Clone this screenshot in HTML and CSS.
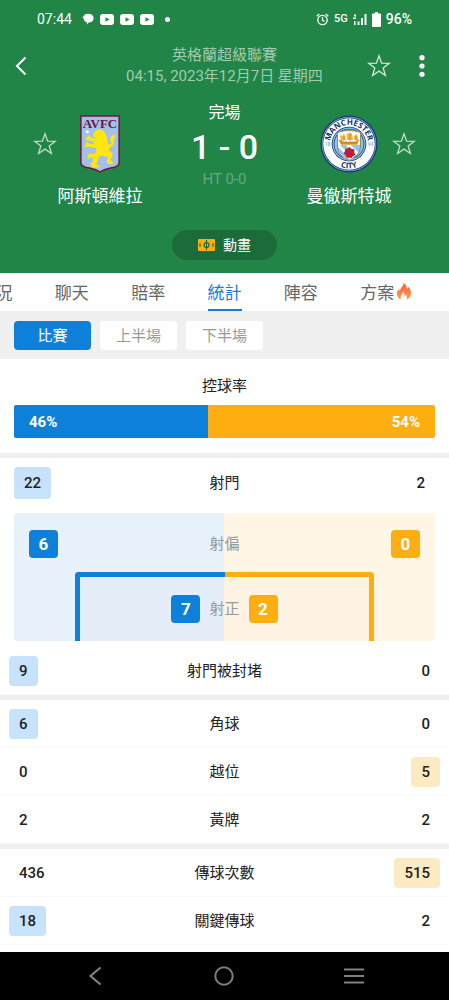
FILE: index.html
```html
<!DOCTYPE html>
<html lang="zh-Hant">
<head>
    <meta charset="utf-8" />
    <meta name="viewport" content="width=device-width, initial-scale=1" />
    <title>阿斯頓維拉 1 - 0 曼徹斯特城</title>
    <link rel="stylesheet" href="styles.css">
</head>
<body>
    <svg class="defs" width="0" height="0" aria-hidden="true">
        <symbol id="star" viewBox="0 0 24 24">
            <path d="M12 1.8l2.6 7.3 7.7.2-6.1 4.7 2.2 7.5-6.4-4.4-6.4 4.4 2.2-7.5-6.1-4.7 7.7-.2z" fill="none" stroke="currentColor" stroke-width="1.3" />
        </symbol>
        <symbol id="video" viewBox="0 0 14 11">
            <rect width="14" height="11" rx="3" fill="#fff" />
            <path d="M5.5 3.2v4.6l4-2.3z" fill="#218548" />
        </symbol>
    </svg>

    <header class="header">
        <!-- 狀態列 -->
        <div class="status">
            <div class="status_left">
                <span class="time">07:44</span>
                <svg width="12" height="12" viewBox="0 0 12 12"><path d="M2.6 1.6C5 .2 9.5.3 11 3c1.2 2.3.4 5-2 6.1-.8.4-1.6.5-2.3.5L5 11.5 4.8 9.3C2.8 8.7 1.600 7 1.5 5.2L.4 4.3z" fill="#fff" /><path d="M.6 3.6L3.3 1.2" stroke="#218548" stroke-width=".6" /></svg>
                <svg width="14" height="11"><use href="#video" /></svg>
                <svg width="14" height="11"><use href="#video" /></svg>
                <svg width="14" height="11"><use href="#video" /></svg>
                <span class="dot"></span>
            </div>
            <div class="status_right">
                <svg width="13" height="13" viewBox="0 0 13 13" fill="none" stroke="#fff" stroke-width="1.3"><circle cx="6.5" cy="7" r="4.7" /><path d="M6.5 4.3v2.900l1.900 1.200M.7 3.200L3.300 1M12.300 3.200L9.700 1" /></svg>
                <span class="net">5G</span>
                <svg width="14" height="13" viewBox="0 0 14 13" fill="#fff"><path d="M1 1.5h2v2H1zM0 4.5h3V6H0zM1 8h1.500v4H1zM4.500 8.500h2V12h-2zM8 5h2v7H8zM11.500 1h2v11h-2z" /></svg>
                <svg width="9" height="15" viewBox="0 0 9 15" fill="#fff"><path d="M3 0h3v1.500h2a1 1 0 0 1 1 1V14a1 1 0 0 1-1 1H1a1 1 0 0 1-1-1V2.500a1 1 0 0 1 1-1h2z" /></svg>
                <span class="power">96%</span>
            </div>
        </div>

        <div class="appbar">
            <div class="appbar_side">
                <a href="#" aria-label="返回"><svg width="12" height="20" viewBox="0 0 12 20"><path d="M10.5 1.5L2 10l8.5 8.5" fill="none" stroke="#fff" stroke-width="2" /></svg></a>
            </div>
            <div class="league">
                <p>英格蘭超級聯賽</p>
                <p>04:15, 2023年12月7日 星期四</p>
            </div>
            <div class="appbar_side appbar_end">
                <button type="button" class="icon_btn" aria-label="收藏"><svg width="24" height="24"><use href="#star" /></svg></button>
                <button type="button" class="icon_btn" aria-label="更多"><svg width="6" height="22" viewBox="0 0 6 22" fill="#fff"><circle cx="3" cy="2.7" r="2.6" /><circle cx="3" cy="11" r="2.6" /><circle cx="3" cy="19.3" r="2.6" /></svg></button>
            </div>
        </div>

        <!-- 比分 -->
        <div class="match">
            <button type="button" class="icon_btn fav" aria-label="收藏阿斯頓維拉"><svg width="24" height="24"><use href="#star" /></svg></button>
            <div class="team">
                <svg width="40" height="58" viewBox="0 0 40 58">
                    <path d="M.9.9h38.2v46.6c0 2.5-1.5 3.6-4 4.4C28.5 53.6 24 54.3 20 57 16 54.3 11.5 53.6 4.9 51.900c-2.5-.8-4-1.9-4-4.4z" fill="#a3c1e6" stroke="#6d1740" stroke-width="1.5" />
                    <text x="20" y="12.5" text-anchor="middle" class="avfc">AVFC</text>
                    <circle cx="7.3" cy="16.8" r="1.5" fill="#fff" />
                    <path d="M14 17.5l2.5-2.3 3-.9 2.5.6 2.4 2 1.8 3.6 1.2 4.2.4 4.2 2.6.7 1.200-1.600-1.500-2.500.2-3 2-2.200 3.500-1.200-1.300 2.800 1 1.500-2.200 1.300.9 2.400-1 3-2.300 1.600-1.500 1-.6 2.200 2 2 2 2.200-1.200 3.600-1.600 2 2.500 2 1 2.400h-5.500l-1.600-2.500 1.500-3.300-.8-1.700-4-.8-3.400.2-1.800 3.500-1.800 4.500 2.600 1.800 1 1.800-6.500.2-2.600-1.200.8-1.500-1.800-1.100 2.400-1.400 1.600-4.800-2.500-.4-3 1.700-1.400-1.400 1.600-1.600-.8-1.800 4.400-.4 3.200.2 1.200-3.300-.2-3.400-3.800.2-3.800-1.200-3.400.8-.5-1.800 1.800-1.400-1.300-1.600 2.600-.2 1.600 1.700 3.400.1 2.200-1-1.500-1.300-4.200-1.400-3.300.3.500-2.200-1-1.400 2.600-.3.800-1.600 1.800 2.200 3.800 1.200 2 .1-.9-1.400-2.400.1z" fill="#ffe60c" />
                </svg>
                <p class="name">阿斯頓維拉</p>
            </div>
            <div class="score">
                <p class="state">完場</p>
                <p class="result">1 - 0</p>
                <p class="half">HT 0-0</p>
            </div>
            <div class="team">
                <svg width="58" height="58" viewBox="0 0 58 58">
                    <defs>
                        <path id="arcTop" d="M12.500 39a19.200 19.200 0 1 1 33 0" />
                        <path id="arcBottom" d="M4.500 29a24.500 24.500 0 0 0 49 0" />
                        <clipPath id="shield"><path d="M17.500 17.500q11.500-4 23 0V32q-1 9-11.500 14Q18.500 41 17.500 32z" /></clipPath>
                    </defs>
                    <circle cx="29" cy="29" r="28.500" fill="#17386e" />
                    <circle cx="29" cy="29" r="27.200" fill="#87b7df" />
                    <circle cx="29" cy="29" r="26.500" fill="#17386e" />
                    <circle cx="29" cy="29" r="25.800" fill="#fff" />
                    <circle cx="29" cy="29" r="17.300" fill="#17386e" />
                    <circle cx="29" cy="29" r="16.500" fill="#90c2e8" />
                    <circle cx="29" cy="29" r="15.300" fill="#234c84" />
                    <circle cx="29" cy="29" r="14.500" fill="#90c2e8" />
                    <g clip-path="url(#shield)">
                        <path d="M16 14h26v34H16z" fill="#fff" />
                        <path d="M16 30h26v18H16z" fill="#91c7ec" />
                        <path d="M16 34L31 49h-6L16 40zM16 30h4l18 18h-4zM26 30h5l12 12v5z" fill="#fff" />
                    </g>
                    <path d="M17.500 17.500q11.500-4 23 0V32q-1 9-11.500 14Q18.500 41 17.500 32z" fill="none" stroke="#8c733c" stroke-width=".8" />
                    <path d="M18.500 25h3l2 1.400h12l2-1.900 2 .1-2.700 5.200H21z" fill="#d99a23" />
                    <path d="M20 20.500h5l1 4.500h-5.500zM26.500 18.500h5.500l1 6.500h-6zM33.500 20.500h4l.7 4.200-4 .6z" fill="#efb735" />
                    <path d="M24 19v7M30 17v9M36 19v6M21 28h16" stroke="#a87720" stroke-width=".6" />
                    <path d="M29.500 32l2 2 2.900.3-.2 2.900 1.200 2.600-2.700 1.200-1.200 2.200-2.400-.8-2.600.4-.9-2.500-2-1.900 1.400-2.300.2-2.400 2.500-.1z" fill="#c51c34" />
                    <g class="city">
                        <text><textPath href="#arcTop" startOffset="50%" text-anchor="middle">MANCHESTER</textPath></text>
                        <text><textPath href="#arcBottom" startOffset="50%" text-anchor="middle">CITY</textPath></text>
                    </g>
                    <g class="year">
                        <text x="7.500" y="31" text-anchor="middle">18</text>
                        <text x="50.500" y="31" text-anchor="middle">94</text>
                    </g>
                </svg>
                <p class="name">曼徹斯特城</p>
            </div>
            <button type="button" class="icon_btn fav" aria-label="收藏曼徹斯特城"><svg width="24" height="24"><use href="#star" /></svg></button>
        </div>

        <button type="button" class="live">
            <svg width="17" height="12" viewBox="0 0 17 12"><rect width="17" height="12" rx="1" fill="#ffae12" /><path d="M8.5 1v10M2 4.300v3.400M15 4.300v3.400" stroke="#1c6b3b" stroke-width="1.2" /><circle cx="8.5" cy="6" r="2.5" fill="none" stroke="#1c6b3b" stroke-width="1.2" /></svg>
            動畫
        </button>
    </header>

    <nav class="tabs">
        <a href="#">概況</a>
        <a href="#">聊天</a>
        <a href="#">賠率</a>
        <a href="#" class="tab_active">統計</a>
        <a href="#">陣容</a>
        <a href="#">方案<svg class="hot" width="16" height="17" viewBox="0 0 16 17">
            <defs><linearGradient id="fire" x1="0" y1="0" x2="0" y2="1"><stop offset="0" stop-color="#ff5a3c" /><stop offset="1" stop-color="#ffa04a" /></linearGradient></defs>
            <path d="M7.500 0C10 1.700 10.800 3.700 10.800 6c.8-.4 1.300-1 1.500-2.200C14 5.500 15 7.600 15 10c0 3.600-2 6-4.500 6.700.8-1.700.5-3.700-.8-5-.2 1-.6 1.400-1.200 1.700.2-1.900-.4-3.400-1.500-4.600-.2 2.300-2.400 3.400-2.400 5.800 0 .8.200 1.500.6 2.100C2.600 15.800 1 13.600 1 10.700c0-2 .7-3.600 1.500-4.800.3 1 .7 1.600 1.300 2C4.500 4.500 7.500 3.300 7.500 0z" fill="url(#fire)" /></svg></a>
    </nav>

    <div class="periods">
        <button type="button" class="period_active">比賽</button>
        <button type="button">上半場</button>
        <button type="button">下半場</button>
    </div>

    <main>
        <section class="possession">
            <h2>控球率</h2>
            <div class="bar">
                <span class="bar_home" style="width:46%">46%</span>
                <span class="bar_away">54%</span>
            </div>
        </section>

        <section class="group">
            <div class="shots">
                <span class="num more_home">22</span>
                <span>射門</span>
                <span class="num">2</span>
            </div>
            <!-- 射門示意圖 -->
            <div class="field">
                <div class="off_target">
                    <b class="box box_home">6</b>
                    <span>射偏</span>
                    <b class="box box_away">0</b>
                </div>
                <div class="goal">
                    <b class="box box_home">7</b>
                    <span>射正</span>
                    <b class="box box_away">2</b>
                </div>
            </div>
            <table class="stats">
                <tr><td><span class="num more_home">9</span></td><th scope="row">射門被封堵</th><td><span class="num">0</span></td></tr>
            </table>
        </section>

        <section class="group">
            <table class="stats">
                <tr><td><span class="num more_home">6</span></td><th scope="row">角球</th><td><span class="num">0</span></td></tr>
                <tr><td><span class="num">0</span></td><th scope="row">越位</th><td><span class="num more_away">5</span></td></tr>
                <tr><td><span class="num">2</span></td><th scope="row">黃牌</th><td><span class="num">2</span></td></tr>
            </table>
        </section>

        <section class="group">
            <table class="stats">
                <tr><td><span class="num">436</span></td><th scope="row">傳球次數</th><td><span class="num more_away">515</span></td></tr>
                <tr><td><span class="num more_home">18</span></td><th scope="row">關鍵傳球</th><td><span class="num">2</span></td></tr>
            </table>
        </section>
    </main>

    <footer class="sysnav">
        <button type="button" class="icon_btn" aria-label="返回"><svg width="14" height="20" viewBox="0 0 14 20"><path d="M12.5 1.5L2.5 10l10 8.5" fill="none" stroke="#808080" stroke-width="2.2" /></svg></button>
        <button type="button" class="icon_btn" aria-label="主畫面"><svg width="20" height="20" viewBox="0 0 20 20"><circle cx="10" cy="10" r="8.7" fill="none" stroke="#808080" stroke-width="2" /></svg></button>
        <button type="button" class="icon_btn" aria-label="最近"><svg width="20" height="16" viewBox="0 0 20 16"><path d="M0 1.5h20M0 8h20M0 14.5h20" stroke="#808080" stroke-width="2" /></svg></button>
    </footer>
</body>
</html>
```
FILE: styles.css
```css
*, *:before, *:after {
    box-sizing:border-box;
}
body {
    margin:0;
    min-height:100vh;
    display:flex;
    flex-direction:column;
    background:#fff;
    color:#222;
    font-family:Roboto, "Noto Sans CJK TC", sans-serif;
    font-size:15px;
    line-height:24px;
}
p, h2 {
    margin:0;
    font-weight:400;
}
a {
    color:inherit;
    text-decoration:none;
}
button {
    padding:0;
    border:none;
    font:inherit;
    color:inherit;
    cursor:pointer;
}
svg {
    display:block;
}
.defs {
    position:absolute;
}
.icon_btn {
    background:none;
}

/* 頁首 */
.header {
    padding-bottom:13px;
    background:#218548;
    color:#fff;
}
.status {
    height:36px;
    padding:2px 37px 0;
    display:flex;
    justify-content:space-between;
    align-items:center;
    font-size:14px;
}
.status_left, .status_right {
    display:flex;
    align-items:center;
    gap:6px;
}
.status_right {
    gap:5px;
}
.status_left .time {
    margin-right:4px;
}
.dot {
    width:5px;
    height:5px;
    margin-left:5px;
    border-radius:50%;
    background:#fff;
}
.net {
    font-size:11px;
    font-weight:500;
}
.power {
    font-weight:500;
}
.appbar {
    height:60px;
    padding:0 24px 0 15px;
    display:flex;
    align-items:center;
    justify-content:space-between;
}
.appbar_side {
    width:80px;
    display:flex;
}
.appbar_end {
    width:71px;
    justify-content:flex-end;
    align-items:center;
    gap:28px;
}
.appbar_end .icon_btn:first-child {
    color:#d3e7da;
}
.league {
    text-align:center;
    line-height:21px;
    color:#a1cbb0;
    white-space:nowrap;
}
.match {
    padding:0 33px;
    display:flex;
    align-items:flex-start;
}
.fav {
    margin-top:36px;
    color:#c0dcc9;
}
.team {
    width:86px;
    padding-top:19px;
    display:flex;
    flex-direction:column;
    align-items:center;
    gap:11px;
}
.name {
    font-size:17px;
    white-space:nowrap;
}
.avfc {
    font:bold 13px "Liberation Serif", serif;
    fill:#6d1740;
}
.city {
    font:bold 8px "Open Sans", sans-serif;
    fill:#17386e;
}
.year {
    font:bold 5px Roboto, sans-serif;
    fill:#87b7df;
}
.score {
    flex:1;
    padding-top:5px;
    text-align:center;
}
.state {
    font-size:16px;
}
.result {
    font-size:34px;
    line-height:44px;
    font-weight:500;
}
.half {
    font-size:15px;
    line-height:20px;
    color:#64aa7f;
}
.live {
    height:30px;
    margin:22px auto 0;
    padding:0 26px;
    display:flex;
    align-items:center;
    gap:8px;
    border-radius:15px;
    background:#1c6b3b;
    font-size:14px;
}

/* 分頁 */
.tabs {
    height:38px;
    display:grid;
    grid-template-columns:repeat(7, 17%);
    justify-content:center;
    justify-items:center;
    overflow:hidden;
    font-size:17px;
    line-height:40px;
    color:#666;
}
.tabs a {
    position:relative;
    height:38px;
}
.tabs .tab_active {
    color:#0f80da;
    border-bottom:2px solid #0f80da;
}
.hot {
    position:absolute;
    left:100%;
    top:10px;
    margin-left:2px;
}
.periods {
    padding:10px 14px 9px;
    display:flex;
    gap:9px;
    background:#f0f0f0;
}
.periods button {
    width:77px;
    height:29px;
    border-radius:4px;
    background:#fff;
    color:#999;
}
.periods .period_active {
    background:#0f80da;
    color:#fff;
}

/* 控球率 */
.possession {
    padding:15px 14px;
    text-align:center;
}
.possession h2 {
    font-size:15px;
}
.bar {
    margin-top:7px;
    display:flex;
    border-radius:2px;
    overflow:hidden;
    line-height:34px;
    height:33px;
    font-weight:700;
    color:#fff;
}
.bar_home {
    padding-left:15px;
    background:#0f80da;
    text-align:left;
}
.bar_away {
    flex:1;
    padding-right:15px;
    background:#ffae12;
    text-align:right;
}

/* 數據 */
main {
    flex:1;
}
.group {
    border-top:5px solid #f0f0f0;
}
.shots {
    padding:9px 14px 14px;
    display:grid;
    grid-template-columns:1fr auto 1fr;
    align-items:center;
}
.shots .num {
    line-height:32px;
    justify-self:start;
}
.shots .num:last-child {
    justify-self:end;
}
.num {
    display:inline-block;
    padding:0 10px;
    border-radius:4px;
    line-height:30px;
    font-weight:500;
}
.more_home {
    background:#c7e2fb;
}
.more_away {
    background:#fde9c2;
}
.field {
    height:128px;
    margin:0 14px 6px;
    padding-top:17px;
    border-radius:4px;
    background:linear-gradient(to right, #e6f1fb 50%, #fff6e6 50%);
    color:#999;
}
.off_target {
    padding:0 15px;
    display:flex;
    justify-content:space-between;
    align-items:center;
}
.box {
    width:29px;
    border-radius:4px;
    text-align:center;
    line-height:28px;
    font-size:17px;
    color:#fff;
}
.box_home {
    background:#0f80da;
}
.box_away {
    background:#ffae12;
}
.goal {
    position:relative;
    width:71%;
    height:69px;
    margin:14px auto 0;
    padding-top:23px;
    display:flex;
    justify-content:center;
    align-items:flex-start;
    gap:9px;
    line-height:28px;
    background:rgba(180, 120, 120, .02);
}
/* 左右門框 */
.goal:before, .goal:after {
    content:'';
    position:absolute;
    top:0;
    bottom:0;
    width:50%;
    border-top:5px solid;
}
.goal:before {
    left:0;
    border-left:5px solid;
    border-color:#0f80da;
    border-top-left-radius:4px;
}
.goal:after {
    right:0;
    border-right:5px solid;
    border-color:#ffae12;
    border-top-right-radius:4px;
}
.stats {
    width:100%;
    table-layout:fixed;
    border-collapse:collapse;
}
.stats td, .stats th {
    height:48px;
    padding:0 9px;
    font-weight:400;
    text-align:center;
}
.stats td:first-child {
    text-align:left;
}
.stats td:last-child {
    text-align:right;
}
.stats tr {
    background:linear-gradient(#f8f8f8, #f8f8f8) bottom / 100% 1px no-repeat;
}

/* 系統導覽 */
.sysnav {
    height:48px;
    padding:0 30px;
    display:grid;
    grid-template-columns:repeat(3, 1fr);
    align-items:center;
    justify-items:center;
    background:#000;
}
```
